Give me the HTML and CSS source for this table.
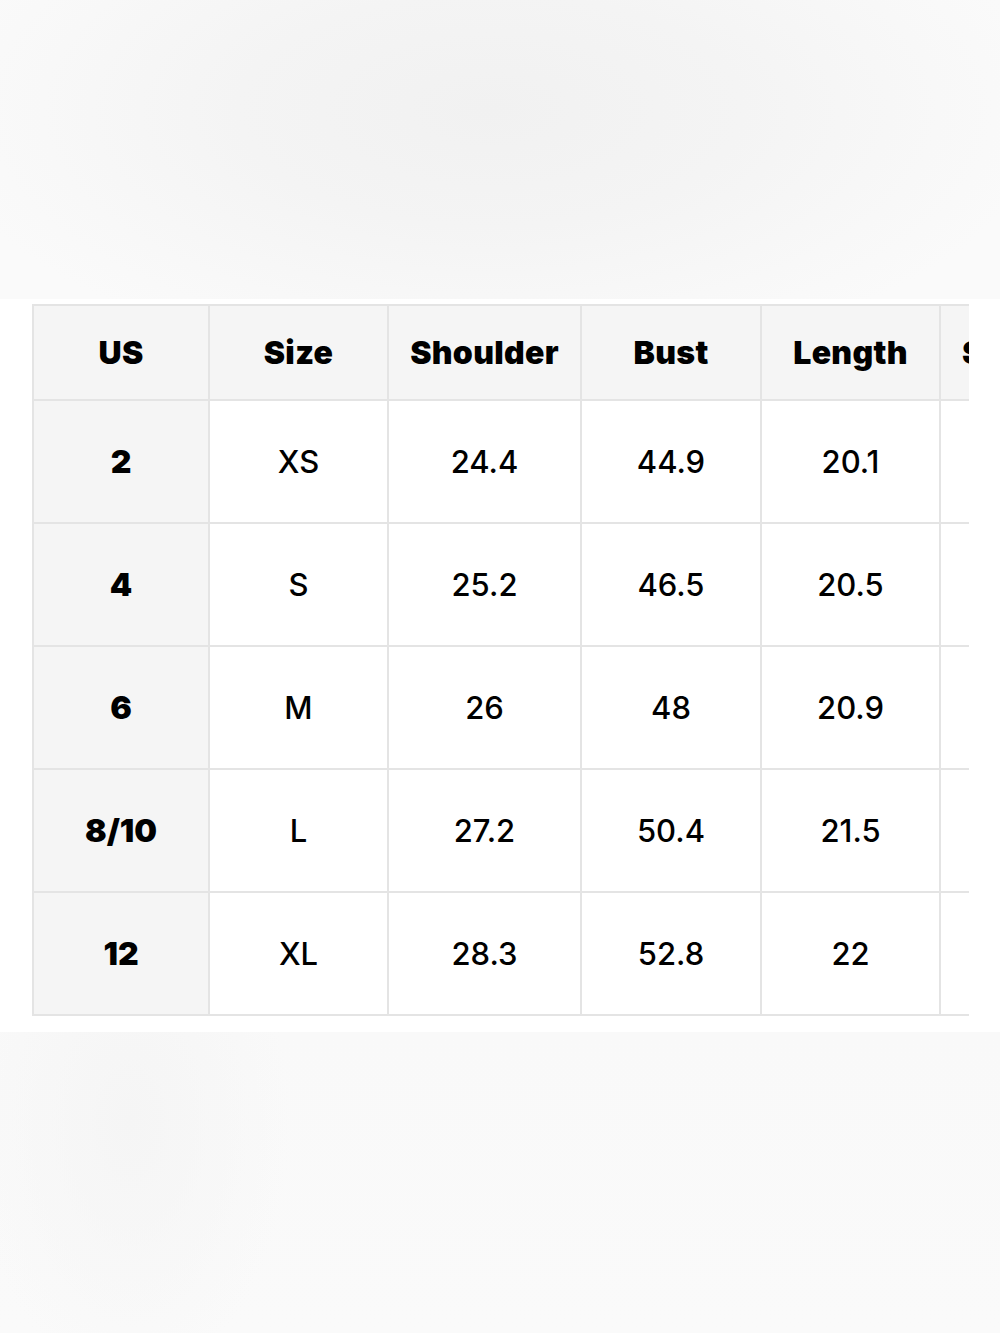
FILE: index.html
```html
<!DOCTYPE html>
<html lang="en">
<head>
<meta charset="utf-8">
<title>Size Chart</title>
<link rel="stylesheet" href="styles.css">
</head>
<body>
<div class="band band-top"></div>
<section class="chart">
  <div class="table-clip">
    <table class="size-table">
      <colgroup>
        <col class="c1"><col class="c2"><col class="c3"><col class="c4"><col class="c5"><col class="c6">
      </colgroup>
      <thead>
        <tr><th>US</th><th>Size</th><th>Shoulder</th><th>Bust</th><th>Length</th><th>Sleeve</th></tr>
      </thead>
      <tbody>
        <tr><th>2</th><td>XS</td><td>24.4</td><td>44.9</td><td>20.1</td><td>23.6</td></tr>
        <tr><th>4</th><td>S</td><td>25.2</td><td>46.5</td><td>20.5</td><td>24</td></tr>
        <tr><th>6</th><td>M</td><td>26</td><td>48</td><td>20.9</td><td>24.4</td></tr>
        <tr><th>8/10</th><td>L</td><td>27.2</td><td>50.4</td><td>21.5</td><td>24.8</td></tr>
        <tr><th>12</th><td>XL</td><td>28.3</td><td>52.8</td><td>22</td><td>25.2</td></tr>
      </tbody>
    </table>
  </div>
</section>
<div class="band band-bottom"></div>
</body>
</html>
```

FILE: styles.css
```css
* { box-sizing: border-box; }
html, body { margin: 0; padding: 0; background: #ffffff; }
body {
  width: 1000px;
  height: 1333px;
  overflow: hidden;
  font-family: Inter, "Liberation Sans", sans-serif;
  color: #000;
}
.band { width: 1000px; }
.band-top {
  height: 299px;
  background: radial-gradient(ellipse 560px 260px at 490px 110px, #f1f1f1 0%, #f4f4f4 45%, #f8f8f8 80%, #fafafa 100%);
}
.band-bottom {
  height: 301px;
  background:
    radial-gradient(ellipse 160px 260px at 130px 90px, #f5f5f5 0%, rgba(249,249,249,0) 100%),
    linear-gradient(#f9f9f9, #fafafa);
}
.chart {
  height: 733px;
  padding-top: 5px;
  padding-left: 32px;
}
.table-clip {
  width: 937px;
  overflow: hidden;
}
.size-table {
  border-collapse: collapse;
  table-layout: fixed;
  width: 1061px;
}
.c1 { width: 176px; }
.c2 { width: 179px; }
.c3 { width: 193px; }
.c4 { width: 180px; }
.c5 { width: 179px; }
.c6 { width: 154px; }
.size-table th,
.size-table td {
  border: 2px solid #e4e4e4;
  text-align: center;
  padding: 0;
  font-size: 31px;
  line-height: 1;
  white-space: nowrap;
}
.size-table thead th {
  height: 95px;
  background: #f5f5f5;
  font-weight: 900;
  font-size: 32px;
  letter-spacing: 0.3px;
}
.size-table tbody tr { height: 123px; }
.size-table tbody th {
  background: #f5f5f5;
  font-weight: 900;
  font-size: 32px;
}
.size-table tbody td {
  font-weight: 500;
  background: #fff;
}
```
